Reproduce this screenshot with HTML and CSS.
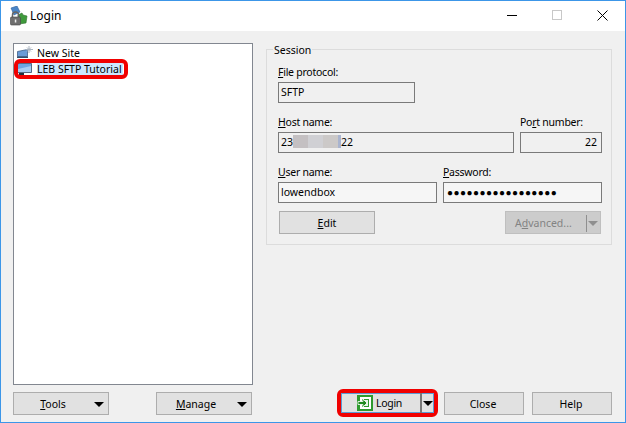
FILE: index.html
```html
<!DOCTYPE html>
<html lang="en">
<head>
<meta charset="utf-8">
<title>Login</title>
<link rel="stylesheet" href="styles.css">
</head>
<body>
<div class="window">
  <header class="titlebar">
    <svg class="app-icon" width="20" height="20" viewBox="0 0 20 20">
      <path d="M10 9l4-2 1 2 4 1-1 7-7 1z" fill="#3f9a3c" stroke="#2c6e2c" stroke-width=".6"/>
      <path d="M3 2l6-2 3 6-6 3z" fill="#4a86c8" stroke="#2f5f99" stroke-width=".6"/>
      <path d="M4.500 11V9a3 3 0 0 1 6 0v2" fill="none" stroke="#666" stroke-width="1.500"/>
      <rect x="2.500" y="11" width="10" height="8" rx="1" fill="#6f6f6f" stroke="#444" stroke-width=".6"/>
      <rect x="6.800" y="13.500" width="1.500" height="3" fill="#eee"/>
    </svg>
    <span class="title">Login</span>
    <div class="caption">
      <svg class="cap" width="11" height="11" viewBox="0 0 11 11"><path d="M0 5.500h10" stroke="#000" fill="none"/></svg>
      <svg class="cap" width="11" height="11" viewBox="0 0 11 11"><rect x=".5" y=".5" width="9" height="9" fill="none" stroke="#c8c8c8"/></svg>
      <svg class="cap" width="11" height="11" viewBox="0 0 11 11"><path d="M.5.5l10 10M10.500.5l-10 10" stroke="#000" fill="none"/></svg>
    </div>
  </header>
  <main class="content">
    <div class="upper">
      <section class="tree">
        <div class="tree-item">
          <svg width="18" height="16" viewBox="0 0 18 16"><path d="M1.500 6.500l10-2v7h-10z" fill="#6a9bd6" stroke="#3d5f8a" stroke-width=".8"/><path d="M1 11.500h11V13H1z" fill="#33506f"/><path d="M13 1v7M10 4.500h7M11 2.500l4 4M15 2.500l-4 4" stroke="#aab4c0" stroke-width="1"/></svg>
          <span>New Site</span>
        </div>
        <div class="tree-item selected">
          <svg width="18" height="16" viewBox="0 0 18 16"><path d="M1.500 2.500h14v9h-14z" fill="#6ea4e0" stroke="#3a4f68" stroke-width=".8"/><path d="M2 8l13-3v6H2z" fill="#a9cdf2"/><path d="M3 12h5v2H3z" fill="#22303f"/></svg>
          <span class="sel-text">LEB SFTP Tutorial</span>
          <div class="mark mark-tree"></div>
        </div>
      </section>
      <section class="session">
        <span class="legend">Session</span>
        <div class="field protocol">
          <label><u>F</u>ile protocol:</label>
          <div class="input ro">SFTP</div>
        </div>
        <div class="row host-row">
          <div class="field host">
            <label><u>H</u>ost name:</label>
            <div class="input host-input">23<span class="blur"><i class="b1"></i><i class="b2"></i><i class="b3"></i><i class="b4"></i></span>22</div>
          </div>
          <div class="field port">
            <label>Po<u>r</u>t number:</label>
            <div class="input right">22</div>
          </div>
        </div>
        <div class="row user-row">
          <div class="field half">
            <label><u>U</u>ser name:</label>
            <div class="input pale">lowendbox</div>
          </div>
          <div class="field half">
            <label><u>P</u>assword:</label>
            <div class="input pale dots">●●●●●●●●●●●●●●●●●</div>
          </div>
        </div>
        <div class="row actions">
          <button class="btn edit"><u>E</u>dit</button>
          <button class="btn advanced"><span class="adv-label">A<u>d</u>vanced...</span><span class="sep"></span><span class="arrow disabled"></span></button>
        </div>
      </section>
    </div>
    <footer class="buttons">
      <button class="btn menu tools"><span class="menu-label"><u>T</u>ools</span><span class="arrow"></span></button>
      <button class="btn menu manage"><span class="menu-label"><u>M</u>anage</span><span class="arrow"></span></button>
      <div class="login-wrap">
        <button class="btn login">
          <span class="login-main">
            <svg width="16" height="16" viewBox="0 0 16 16"><rect width="16" height="16" fill="#2e9a2e"/><rect x="3" y="2" width="11" height="12" fill="#fff"/><rect x="5" y="4" width="7" height="8" fill="#2e9a2e"/><rect x="6" y="5" width="5" height="6" fill="#e6f5e6"/><path d="M1 6.500h5V4l4 4-4 4V9.500H1z" fill="#1f8a1f" stroke="#fff" stroke-width=".8"/></svg>
            <span>Login</span>
          </span>
          <span class="login-sep"></span>
          <span class="arrow"></span>
        </button>
      </div>
      <button class="btn close">Close</button>
      <button class="btn help">Help</button>
    </footer>
  </main>
</div>
</body>
</html>
```
FILE: styles.css
```css
* { box-sizing: border-box; }
html, body { margin: 0; padding: 0; }
body { width: 626px; height: 423px; overflow: hidden; font: 10.5px/15px "Noto Sans", "Open Sans", sans-serif; color: #000; }
.window { width: 626px; height: 423px; border: 1px solid #3c96e8; display: flex; flex-direction: column; background: #f0f0f0; }
.titlebar { height: 30px; background: #fff; display: flex; align-items: center; padding-left: 7px; flex: none; }
.app-icon { margin-right: 2px; }
.title { font-size: 12px; margin-bottom: 1px; }
.caption { margin-left: auto; display: flex; gap: 34px; padding-right: 17px; align-items: center; margin-bottom: 1px; }
.content { flex: 1; display: flex; flex-direction: column; padding: 12px 13px 7px 12px; }
.upper { display: flex; height: 342px; gap: 13px; }
.tree { width: 240px; background: #fff; border: 1px solid #828790; padding: 1px 2px; }
.tree-item { display: flex; align-items: center; height: 16px; gap: 3px; position: relative; }
.sel-text { background: #cce8ff; width: 86px; white-space: nowrap; }
.mark { position: absolute; border: 4px solid #f00000; border-radius: 6px; }
.mark-tree { left: -2px; top: -2px; width: 114px; height: 20px; }
.session { width: 346px; height: 196px; margin-top: 6px; border: 1px solid #dcdcdc; position: relative; padding: 15px 10px 0 11px; display: flex; flex-direction: column; }
.legend { position: absolute; left: 6px; top: -7px; background: #f0f0f0; padding: 0 1px; line-height: 14px; }
.field { display: flex; flex-direction: column; }
.field label { line-height: 15px; margin-bottom: 2px; letter-spacing: -0.25px; }
.input { height: 21px; border: 1px solid #7a7a7a; padding: 0 2px; line-height: 19px; white-space: nowrap; background: #f0f0f0; }
.protocol { width: 137px; }
.row { display: flex; }
.host-row { margin-top: 12px; gap: 6px; }
.host { flex: none; width: 236px; }
.port { flex: none; width: 82px; }
.host-input { display: flex; }
.right { text-align: right; padding-right: 4px; }
.blur { display: flex; height: 13px; margin-top: 2px; }
.blur i { display: block; height: 13px; }
.b1 { width: 15px; background: #c4c0c2; }
.b2 { width: 15px; background: #d0d0d4; }
.b3 { width: 15px; background: #ccc9c8; }
.b4 { width: 3px; background: #a9b4cf; }
.user-row { margin-top: 12px; gap: 6px; }
.half { flex: none; width: 159px; }
.pale { background: #f6f6f6; }
.dots { font-size: 10px; letter-spacing: 0.45px; padding-left: 3px; }
.actions { margin-top: 8px; justify-content: space-between; padding: 0 0 0 1px; }
.btn { height: 23px; border: 1px solid #adadad; background: #e1e1e1; font: inherit; color: #000; padding: 1px 0 0; display: flex; align-items: center; justify-content: center; }
.edit { width: 96px; }
.advanced { width: 96px; color: #838383; background: #cccccc; border-color: #bfbfbf; justify-content: flex-start; }
.adv-label { margin-left: 9px; width: 71px; text-align: left; }
.sep { width: 1px; height: 17px; background: #8f8f8f; }
.arrow { width: 0; height: 0; border-left: 5px solid transparent; border-right: 5px solid transparent; border-top: 5px solid #000; flex: none; }
.arrow.disabled { border-top-color: #8f8f8f; margin-left: 1px; }
.buttons { display: flex; margin-top: 7px; height: 23px; }
.menu { width: 96px; position: relative; }
.menu .menu-label { margin-right: 16px; }
.menu .arrow { position: absolute; right: 4px; top: 9px; }
.manage { margin-left: 47px; }
.login-wrap { margin-left: 85px; margin-top: -3px; width: 101px; height: 28px; border: 4px solid #f00000; border-radius: 6px; flex: none; }
.login { width: 93px; height: 20px; border-color: #5a9bd5; padding: 0; justify-content: flex-start; }
.login-main { display: flex; align-items: center; gap: 3px; margin-left: 15px; width: 65px; letter-spacing: -0.3px; }
.login-sep { width: 2px; height: 20px; background: #777; flex: none; }
.login .arrow { margin-left: 1px; }
.close { width: 80px; margin-left: 6px; padding-right: 2px; }
.help { width: 80px; margin-left: 8px; padding-right: 2px; }
u { text-underline-offset: 1px; }
```
